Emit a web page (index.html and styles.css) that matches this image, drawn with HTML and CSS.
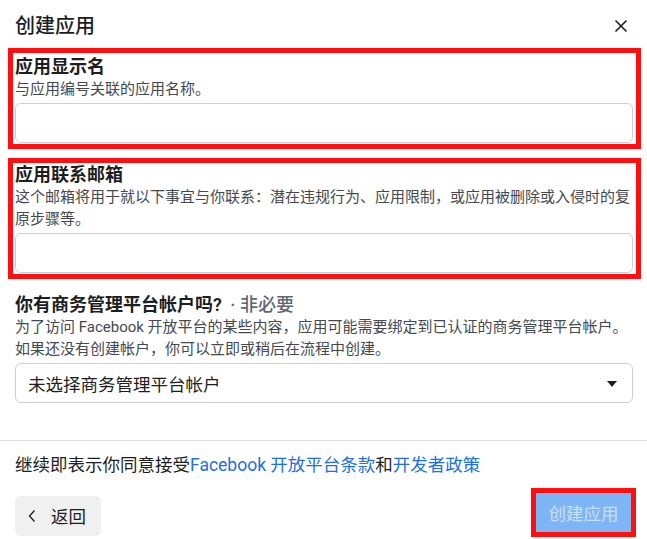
FILE: index.html
```html
<!DOCTYPE html>
<html lang="zh-CN">
<head>
    <meta charset="UTF-8">
    <meta name="viewport" content="width=device-width, initial-scale=1.0">
    <title>创建应用</title>
    <link rel="stylesheet" href="styles.css">
</head>
<body>

    <div class="dialog">
        <header class="dialog-header">
            <h1 class="dialog-title">创建应用</h1>
            <button class="close-btn" aria-label="关闭">
                <svg width="14" height="14" viewBox="0 0 14 14">
                    <path d="M1.5 1.5 L12.5 12.5 M12.5 1.5 L1.5 12.5" stroke="#1c1e21" stroke-width="1.6" fill="none"/>
                </svg>
            </button>
        </header>

        <div class="dialog-body">
            <div class="field highlight">
                <div class="field-label">应用显示名</div>
                <div class="field-desc">与应用编号关联的应用名称。</div>
                <input class="text-input" type="text">
            </div>

            <div class="field highlight second">
                <div class="field-label">应用联系邮箱</div>
                <div class="field-desc">这个邮箱将用于就以下事宜与你联系：潜在违规行为、应用限制，或应用被删除或入侵时的复原步骤等。</div>
                <input class="text-input" type="email">
            </div>

            <div class="field plain">
                <div class="field-label">你有商务管理平台帐户吗? <span class="optional">· 非必要</span></div>
                <div class="field-desc">为了访问 Facebook 开放平台的某些内容，应用可能需要绑定到已认证的商务管理平台帐户。如果还没有创建帐户，你可以立即或稍后在流程中创建。</div>
                <div class="select-box">
                    <span>未选择商务管理平台帐户</span>
                    <span class="caret"></span>
                </div>
            </div>
        </div>

        <footer class="dialog-footer">
            <p class="terms">继续即表示你同意接受<a href="#">Facebook 开放平台条款</a>和<a href="#">开发者政策</a></p>
            <div class="actions">
                <button class="back-btn">
                    <svg width="10" height="14" viewBox="0 0 10 14">
                        <path d="M7.5 1.5 L2.5 7 L7.5 12.5" stroke="#1c1e21" stroke-width="1.3" fill="none"/>
                    </svg>
                    <span>返回</span>
                </button>
                <div class="create-wrap">
                    <button class="create-btn" disabled>创建应用</button>
                </div>
            </div>
        </footer>
    </div>

</body>
</html>
```

FILE: styles.css
```css
body {
    font-family: Roboto, "Noto Sans CJK SC", sans-serif;
    margin: 0;
    padding: 0;
    background: #fff;
    color: #1c1e21;
    overflow: hidden;
}

.dialog {
    width: 647px;
    height: 539px;
    display: flex;
    flex-direction: column;
}

.dialog-header {
    height: 48px;
    display: flex;
    align-items: center;
    justify-content: space-between;
    padding: 3px 19px 0 15px;
    box-sizing: border-box;
}

.dialog-title {
    margin: 0;
    font-size: 20px;
    font-weight: 500;
    line-height: 24px;
}

.close-btn {
    border: none;
    background: none;
    padding: 0;
    width: 14px;
    height: 14px;
    display: flex;
}

.dialog-body {
    padding: 0 14px 0 15px;
    height: 392px;
}

.field-label {
    font-size: 18px;
    font-weight: 600;
    line-height: 22px;
}

.optional {
    color: #606770;
    font-weight: 500;
    margin-left: 4px;
}

.field-desc {
    font-size: 15px;
    line-height: 22px;
    color: #444950;
}

.field.highlight {
    border: 5px solid #ff0f0f;
    margin: 0 -8px 0 -7px;
    padding: 3px 3px 1px 2px;
}

.field.second {
    margin-top: 9px;
    padding-top: 1px;
}

.field.plain {
    margin-top: 15px;
}

.text-input {
    display: block;
    width: 100%;
    height: 40px;
    box-sizing: border-box;
    border: 1px solid #ccd0d5;
    border-radius: 6px;
    margin-top: 3px;
    font-size: 16px;
    outline: none;
}

.select-box {
    height: 40px;
    box-sizing: border-box;
    border: 1px solid #ccd0d5;
    border-radius: 6px;
    margin-top: 3px;
    padding: 0 15px 0 12px;
    display: flex;
    align-items: center;
    justify-content: space-between;
    font-size: 17.5px;
}

.caret {
    width: 0;
    height: 0;
    border-left: 5px solid transparent;
    border-right: 5px solid transparent;
    border-top: 6px solid #1c1e21;
    margin-top: 2px;
}

.dialog-footer {
    border-top: 1px solid #dadde1;
    padding: 13px 11px 0 15px;
}

.terms {
    margin: 0;
    font-size: 17.5px;
    line-height: 22px;
}

.terms a {
    color: #216fdb;
    text-decoration: none;
}

.actions {
    display: flex;
    justify-content: space-between;
    align-items: center;
    margin-top: 12px;
}

.back-btn {
    height: 40px;
    width: 86px;
    margin-top: 6px;
    border: none;
    border-radius: 6px;
    background: #f0f0f0;
    display: flex;
    align-items: center;
    gap: 14px;
    padding: 0 0 0 12px;
    font-family: inherit;
    font-size: 17.5px;
    color: #1c1e21;
}

.create-wrap {
    border: 5px solid #ff0f0f;
}

.create-btn {
    display: block;
    width: 95px;
    height: 39px;
    border: none;
    background: #7db5f5;
    color: rgba(255, 255, 255, 0.6);
    font-family: inherit;
    font-size: 17.5px;
    padding: 0;
}
```
